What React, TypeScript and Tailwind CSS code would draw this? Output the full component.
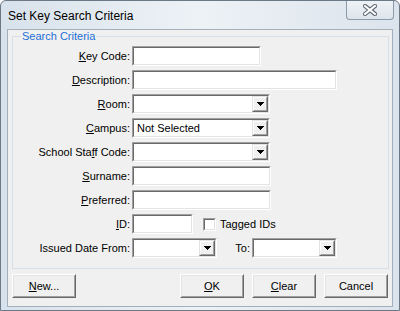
import React from 'react';

const FieldBox: React.FC<{ className?: string; children?: React.ReactNode }> = ({ className = '', children }) => (
  <div className={`h-[20px] border border-t-[#a0a0a0] border-l-[#a0a0a0] border-b-white border-r-white ${className}`}>
    <div className="h-full border border-t-[#696969] border-l-[#696969] border-b-[#e3e3e3] border-r-[#e3e3e3] bg-white flex items-center">
      {children}
    </div>
  </div>
);

const DropBtn = () => (
  <div className="w-[16px] h-full border border-t-[#e3e3e3] border-l-[#e3e3e3] border-b-[#696969] border-r-[#696969]">
    <div className="h-full border border-t-white border-l-white border-b-[#a0a0a0] border-r-[#a0a0a0] bg-[#f0f0f0] flex items-center justify-center">
      <svg width="7" height="4" viewBox="0 0 7 4">
        <path d="M0 0h7v1H0z M1 1h5v1H1z M2 2h3v1H2z M3 3h1v1H3z" fill="#000" />
      </svg>
    </div>
  </div>
);

const Combo: React.FC<{ className?: string; value?: string }> = ({ className = '', value }) => (
  <FieldBox className={className}>
    <span className="flex-1 pl-[3px] whitespace-nowrap overflow-hidden">{value}</span>
    <DropBtn />
  </FieldBox>
);

// access-key letter
const K: React.FC<{ children: React.ReactNode }> = ({ children }) => (
  <span className="underline underline-offset-[1px]">{children}</span>
);

const Row: React.FC<{ label: React.ReactNode; children: React.ReactNode }> = ({ label, children }) => (
  <div className="flex items-center h-[20px]">
    <div className="w-[119px] pr-[2px] text-right whitespace-nowrap">{label}</div>
    {children}
  </div>
);

const Btn: React.FC<{ children: React.ReactNode }> = ({ children }) => (
  <button className="w-[64px] h-[24px] border border-t-white border-l-white border-b-[#696969] border-r-[#696969]">
    <div className="h-full border border-t-[#e3e3e3] border-l-[#e3e3e3] border-b-[#a0a0a0] border-r-[#a0a0a0] bg-[#f0f0f0] flex items-center justify-center">
      {children}
    </div>
  </button>
);

const CloseBtn = () => (
  <div className="mr-[5px] w-[48px] h-[19px] rounded-b-[4px] border border-t-0 border-[#8d9aa8] bg-gradient-to-b from-[#eef2f6] to-[#dde4eb] flex items-center justify-center">
    <svg width="14" height="12" viewBox="0 0 14 12">
      <path d="M2 2L12 10M12 2L2 10" stroke="#5b6570" strokeWidth="4.2" strokeLinecap="square" />
      <path d="M2 2L12 10M12 2L2 10" stroke="#ffffff" strokeWidth="2" strokeLinecap="square" />
    </svg>
  </div>
);

export default function App() {
  return (
    <div className="w-[400px] h-[311px] border border-[#6b7886] rounded-t-[6px] bg-gradient-to-r from-[#d8e2ec] via-[#edf2f6] to-[#dbe3ec] flex flex-col font-['Liberation_Sans',Arial,sans-serif] text-[11px] leading-[13px] text-black">
      <div className="h-[28px] flex items-start justify-between">
        <span className="pl-[7px] pt-[8px] text-[12px] leading-[14px]">Set Key Search Criteria</span>
        <CloseBtn />
      </div>
      <div className="mx-[6px] mb-[3px] flex-1 border border-[#a3afbb] bg-[#f0f0f0] flex flex-col">
        <div className="relative ml-[4px] mt-[6px] w-[377px] h-[233px] border border-[#d5dfe5] pt-[9px] flex flex-col gap-[4px]">
          <span className="absolute left-[8px] -top-[7px] px-[1px] bg-[#f0f0f0] text-[#1c6fd6]">Search Criteria</span>
          <Row label={<><K>K</K>ey Code:</>}>
            <FieldBox className="w-[129px]" />
          </Row>
          <Row label={<><K>D</K>escription:</>}>
            <FieldBox className="w-[205px]" />
          </Row>
          <Row label={<><K>R</K>oom:</>}>
            <Combo className="w-[138px]" />
          </Row>
          <Row label={<><K>C</K>ampus:</>}>
            <Combo className="w-[138px]" value="Not Selected" />
          </Row>
          <Row label={<>School Sta<K>f</K>f Code:</>}>
            <Combo className="w-[138px]" />
          </Row>
          <Row label={<><K>S</K>urname:</>}>
            <FieldBox className="w-[139px]" />
          </Row>
          <Row label={<><K>P</K>referred:</>}>
            <FieldBox className="w-[139px]" />
          </Row>
          <Row label={<><K>I</K>D:</>}>
            <FieldBox className="w-[61px]" />
            <div className="ml-[10px] w-[13px] h-[13px] border border-t-[#a0a0a0] border-l-[#a0a0a0] border-b-white border-r-white">
              <div className="h-full border border-t-[#696969] border-l-[#696969] border-b-[#e3e3e3] border-r-[#e3e3e3] bg-white" />
            </div>
            <span className="ml-[4px]">Tagged IDs</span>
          </Row>
          <Row label="Issued Date From:">
            <Combo className="w-[85px]" />
            <span className="w-[35px] pr-[2px] text-right">To:</span>
            <Combo className="w-[85px]" />
          </Row>
        </div>
        <div className="mt-[5px] ml-[4px] w-[376px] flex">
          <Btn><span><K>N</K>ew...</span></Btn>
          <div className="ml-auto flex gap-[8px]">
            <Btn><span><K>O</K>K</span></Btn>
            <Btn><span><K>C</K>lear</span></Btn>
            <Btn><span>Cancel</span></Btn>
          </div>
        </div>
      </div>
    </div>
  );
}
